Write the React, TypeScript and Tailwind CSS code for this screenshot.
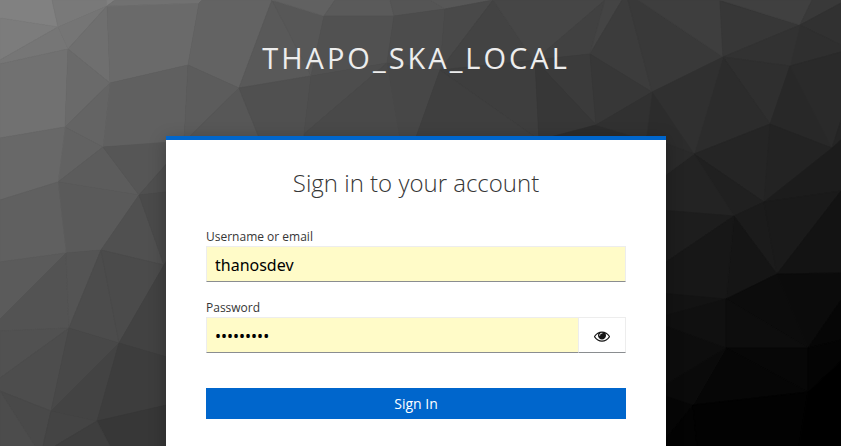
import { useState } from 'react';

type Facet = [string, string];

const facets: Facet[] = [
  ['0,0 52,0 58,27 0,18', '#818181'],
  ['52,0 107,0 107,6 58,27', '#797979'],
  ['107,6 107,0 115,0', '#808080'],
  ['0,18 58,27 0,60', '#7c7c7c'],
  ['0,60 58,27 68,49 0,64', '#767676'],
  ['58,27 107,6 68,49', '#757575'],
  ['107,6 110,83 68,49', '#6f6f6f'],
  ['0,64 68,49 65,127 0,138', '#717171'],
  ['68,49 110,83 65,127', '#6a6a6a'],
  ['107,6 199,3 188,65 110,83', '#6a6a6a'],
  ['107,6 115,0 202,0 199,3', '#717171'],
  ['199,3 202,0 272,0 239,88 188,65', '#636363'],
  ['110,83 188,65 184,142 103,147', '#606060'],
  ['65,127 110,83 103,147', '#646464'],
  ['65,127 103,147 58,182', '#626262'],
  ['0,138 65,127 58,182 0,200', '#686868'],
  ['188,65 239,88 184,142', '#5c5c5c'],
  ['239,88 260,140 184,142', '#575757'],
  ['103,147 139,195 58,182', '#5c5c5c'],
  ['103,147 184,141 184,144 139,195', '#565656'],
  ['139,195 184,144 184,190', '#4f4f4f'],
  ['58,182 139,195 101,250 66,253', '#5a5a5a'],
  ['0,200 58,182 66,253 0,262', '#606060'],
  ['0,262 66,253 0,319', '#5b5b5b'],
  ['0,319 66,253 69,328 0,331', '#535353'],
  ['66,253 101,250 69,328', '#545454'],
  ['0,331 69,328 0,378', '#515151'],
  ['101,250 119,343 69,328', '#4c4c4c'],
  ['101,250 139,195 164,265', '#505050'],
  ['139,195 184,190 184,235 164,265', '#4a4a4a'],
  ['101,250 164,265 119,343', '#4b4b4b'],
  ['0,378 69,328 51,411 0,391', '#4d4d4d'],
  ['69,328 119,343 51,411', '#484848'],
  ['0,391 51,411 43,446 35,446', '#494949'],
  ['0,391 35,446 0,446', '#4c4c4c'],
  ['51,411 119,343 97,421', '#434343'],
  ['51,411 97,421 55,446 43,446', '#444444'],
  ['119,343 164,265 184,235 184,362', '#424242'],
  ['119,343 184,362 184,401 97,421', '#3d3d3d'],
  ['97,421 184,401 184,446 110,446', '#373737'],
  ['55,446 97,421 110,446', '#3e3e3e'],
  ['272,0 311,76 239,88', '#595959'],
  ['272,0 324,16 311,76', '#575757'],
  ['272,0 335,0 324,16', '#616161'],
  ['335,0 390,0 394,16 324,16', '#5a5a5a'],
  ['390,0 430,0 445,9 394,16', '#555555'],
  ['430,0 493,0 445,9', '#575757'],
  ['324,16 394,16 387,63 311,76', '#515151'],
  ['239,88 311,76 304,134 304,140 260,140', '#505050'],
  ['311,76 387,63 304,134', '#4d4d4d'],
  ['394,16 445,9 440,70 387,63', '#4c4c4c'],
  ['387,63 440,70 415,140 400,140', '#474747'],
  ['304,134 387,63 400,140 304,140', '#494949'],
  ['445,9 493,0 440,70', '#494949'],
  ['493,0 535,62 440,70', '#434343'],
  ['493,0 605,0 535,62', '#464646'],
  ['605,0 590,54 535,60', '#414141'],
  ['622,0 605,0 590,54', '#444444'],
  ['440,70 535,60 539,140', '#3e3e3e'],
  ['440,70 539,140 415,140', '#3f3f3f'],
  ['535,60 590,54 596,125', '#3b3b3b'],
  ['535,60 596,125 539,140', '#373737'],
  ['539,140 596,125 650,140', '#2c2c2c'],
  ['628,0 652,92 590,54 622,0', '#3c3c3c'],
  ['628,0 638,0 723,57 652,92', '#393939'],
  ['638,0 720,0 723,57', '#3e3e3e'],
  ['720,1 800,25 723,57', '#373737'],
  ['720,0 812,0 800,25', '#404040'],
  ['812,0 841,0 841,3 800,25', '#393939'],
  ['800,25 841,3 841,45', '#313131'],
  ['800,25 841,45 841,52 790,66', '#2f2f2f'],
  ['723,57 800,25 790,66', '#323232'],
  ['723,57 790,66 770,124', '#2f2f2f'],
  ['790,66 832,148 770,124', '#282828'],
  ['790,66 841,52 841,120 832,148', '#2a2a2a'],
  ['832,148 841,120 841,140', '#252525'],
  ['723,57 770,124 694,154', '#2c2c2c'],
  ['652,92 723,57 694,154', '#303030'],
  ['652,92 694,154 646,136', '#2c2c2c'],
  ['590,54 652,92 596,125', '#373737'],
  ['596,125 652,92 646,140', '#313131'],
  ['694,154 770,124 764,202', '#252525'],
  ['770,124 832,148 764,202', '#232323'],
  ['764,202 832,148 841,140 841,191', '#1c1c1c'],
  ['694,154 764,202 734,216', '#202020'],
  ['694,154 734,216 660,210 660,179', '#232323'],
  ['646,136 694,154 660,179', '#2a2a2a'],
  ['764,202 777,274 734,216', '#1b1b1b'],
  ['764,202 841,191 777,274', '#1a1a1a'],
  ['841,191 841,273 777,274', '#131313'],
  ['660,210 734,216 660,266', '#1d1d1d'],
  ['734,216 777,274 726,299', '#151515'],
  ['734,216 726,299 660,293 660,266', '#171717'],
  ['660,293 726,299 660,317', '#131313'],
  ['660,317 726,299 726,348 660,324', '#101010'],
  ['660,324 726,348 660,388', '#0d0d0d'],
  ['726,299 777,274 808,348', '#0c0c0c'],
  ['726,299 808,348 726,348', '#0d0d0d'],
  ['777,274 841,273 841,300 808,348', '#0b0b0b'],
  ['726,348 808,348 808,392', '#070707'],
  ['726,348 808,392 693,405', '#060606'],
  ['808,348 841,300 841,340', '#060606'],
  ['808,348 841,340 841,361 808,392', '#040404'],
  ['660,388 726,348 693,405 660,394', '#0a0a0a'],
  ['660,394 693,405 660,446', '#060606'],
  ['660,446 693,405 697,446', '#030303'],
  ['697,446 693,405 808,392 799,446', '#020202'],
  ['799,446 808,392 841,361 841,446', '#000000'],
];

function Backdrop() {
  return (
    <svg className="absolute inset-0 h-[446px] w-[841px]" viewBox="0 0 841 446" aria-hidden="true">
      {facets.map(([points, color]) => (
        <polygon key={points} points={points} fill={color} stroke={color} strokeWidth="0.7" />
      ))}
    </svg>
  );
}

function EyeIcon() {
  return (
    <svg className="size-4" viewBox="0 0 1792 1792" fill="currentColor" aria-hidden="true">
      <path d="M1664 960q-152-236-381-353 61 104 61 225 0 185-131.5 316.5t-316.5 131.5-316.5-131.5-131.5-316.5q0-121 61-225-229 117-381 353 133 205 333.5 326.5t434.5 121.5 434.5-121.5 333.5-326.5zm-720-384q0-20-14-34t-34-14q-125 0-214.5 89.5t-89.5 214.5q0 20 14 34t34 14 34-14 14-34q0-86 61-147t147-61q20 0 34-14t14-34zm848 384q0 34-20 69-140 230-376.5 368.5t-499.5 138.5-499.5-139-376.5-368q-20-35-20-69t20-69q140-229 376.5-368t499.5-139 499.5 139 376.5 368q20 35 20 69z" />
    </svg>
  );
}

const field =
  "block h-9 min-w-0 rounded-none border border-[#ededed] border-b-[#8a8d90] bg-[#fffbc8] px-2 pt-0.5 font-['Noto_Sans',sans-serif] text-base leading-6 text-black outline-none";

export default function App() {
  const [visible, setVisible] = useState(false);
  return (
    <div className="relative h-[446px] w-[841px] overflow-hidden bg-[#333] font-['Open_Sans',sans-serif]">
      <Backdrop />
      <div className="relative flex flex-col pl-[166px]">
        <header className="flex h-[136px] w-[500px] justify-center pt-[39px]">
          <h1 className="whitespace-nowrap text-[29px] leading-[38px] tracking-[3px] text-[#ededed] uppercase">
            thapo_ska_local
          </h1>
        </header>
        <main className="h-[340px] w-[500px] border-t-4 border-[#0066cc] bg-white px-10 shadow-[0_4px_16px_rgba(3,3,3,0.25)]">
          <h2 className="pt-[27px] text-center text-2xl leading-[31px] font-light text-[#363636]">
            Sign in to your account
          </h2>
          <form className="pt-[30px]" onSubmit={(e) => e.preventDefault()}>
            <label htmlFor="username" className="block h-[18px] text-xs leading-[18px] text-[#363636]">
              Username or email
            </label>
            <input id="username" className={`${field} w-full`} defaultValue="thanosdev" />
            <label htmlFor="password" className="mt-[17px] block h-[18px] text-xs leading-[18px] text-[#363636]">
              Password
            </label>
            <div className="flex">
              <input
                id="password"
                type={visible ? 'text' : 'password'}
                className={`${field} flex-1`}
                defaultValue="localpass"
              />
              <button
                type="button"
                aria-label="Show password"
                onClick={() => setVisible(!visible)}
                className="flex h-9 w-[47px] items-center justify-center border border-l-0 border-[#ededed] border-b-[#8a8d90] bg-white pt-0.5 text-[#151515]"
              >
                <EyeIcon />
              </button>
            </div>
            <button type="submit" className="mt-[35px] block h-[31px] w-full bg-[#0066cc] text-sm leading-[31px] text-white">
              Sign In
            </button>
          </form>
        </main>
      </div>
    </div>
  );
}
